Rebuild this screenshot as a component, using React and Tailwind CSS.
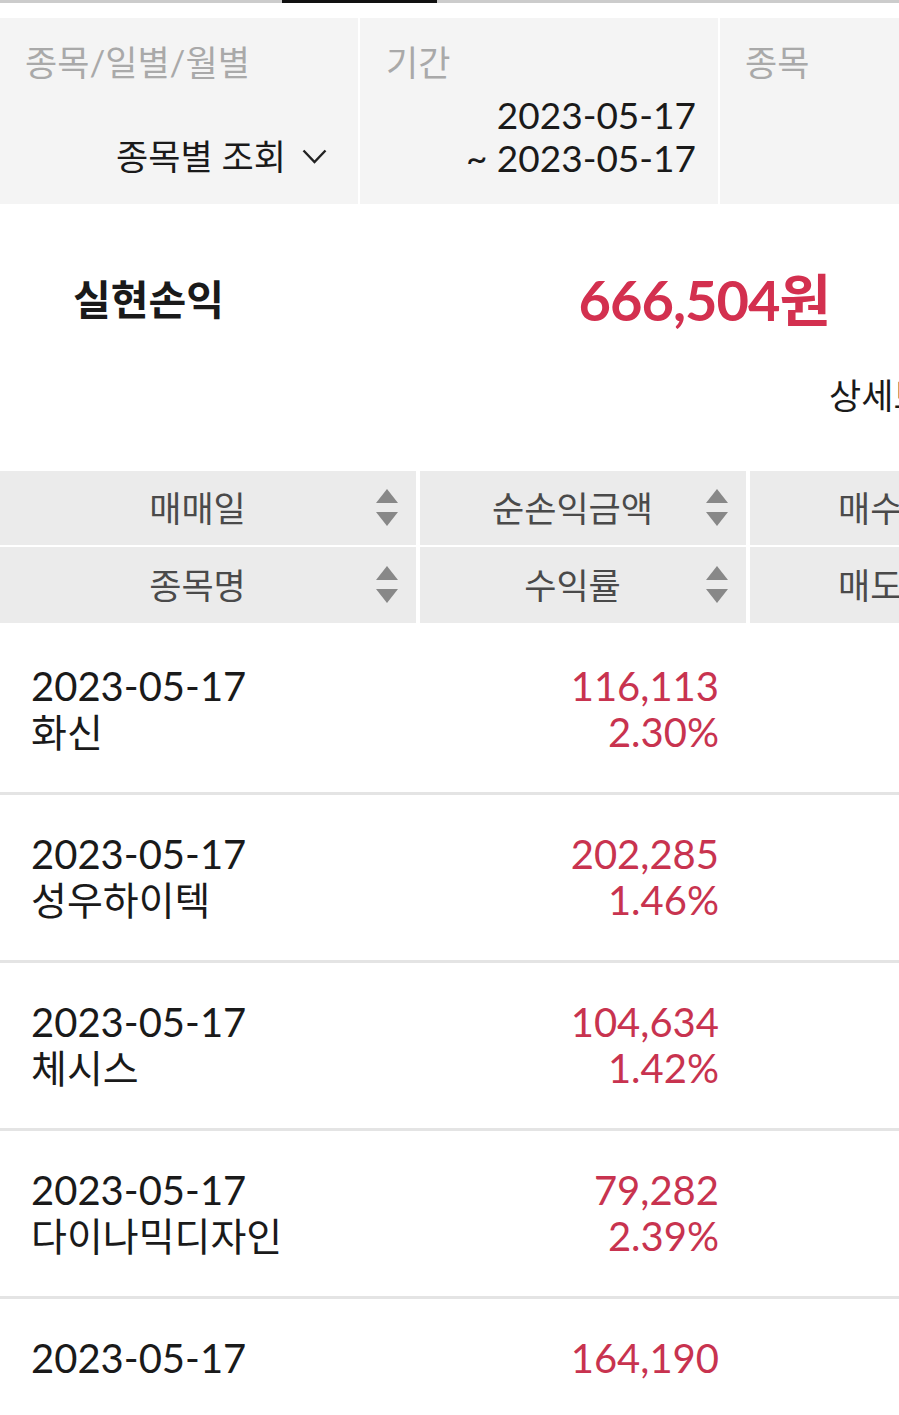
import React from 'react';

const rows = [
  { date: '2023-05-17', name: '화신', amount: '116,113', rate: '2.30%' },
  { date: '2023-05-17', name: '성우하이텍', amount: '202,285', rate: '1.46%' },
  { date: '2023-05-17', name: '체시스', amount: '104,634', rate: '1.42%' },
  { date: '2023-05-17', name: '다이나믹디자인', amount: '79,282', rate: '2.39%' },
  { date: '2023-05-17', name: '', amount: '164,190', rate: '' },
];

function SortArrows() {
  return (
    <svg width="22" height="38" viewBox="0 0 22 38" className="shrink-0">
      <path d="M11 0 L22 14 L0 14 Z" fill="#888888" />
      <path d="M0 23 L22 23 L11 37 Z" fill="#888888" />
    </svg>
  );
}

function HeaderCell({ label, width, arrows = true }) {
  return (
    <div
      className={`flex items-center h-full bg-[#ebebeb] text-[35px] text-[#4a4a4a] ${width}`}
    >
      <div className="flex-1 text-center pl-[19px] whitespace-nowrap">{label}</div>
      {arrows && <div className="pr-[18px]"><SortArrows /></div>}
    </div>
  );
}

export default function App() {
  return (
    <div className="w-[899px] overflow-hidden bg-white font-[Lato,'Noto_Sans_CJK_KR',sans-serif] text-[#1a1a1a]">
      {/* tab indicator */}
      <div className="flex h-[3px] bg-[#cccccc]">
        <div className="w-[282px]" />
        <div className="w-[155px] bg-[#111111]" />
      </div>

      {/* filter bar */}
      <div className="mt-[15px] flex h-[186px] gap-[2px] bg-white">
        <div className="w-[358px] shrink-0 bg-[#f4f4f4] pt-[24px] pl-[25px] pr-[31px] flex flex-col">
          <div className="text-[35px] leading-[40px] text-[#a9a9a9] whitespace-nowrap">종목/일별/월별</div>
          <div className="mt-[53px] flex items-center justify-end gap-[16px] text-[35px] leading-[43px]">
            <span className="whitespace-nowrap">종목별 조회</span>
            <svg width="25" height="15" viewBox="0 0 25 15">
              <polyline points="1.5,1.5 12.5,13 23.5,1.5" fill="none" stroke="#222" strokeWidth="2.4" />
            </svg>
          </div>
        </div>
        <div className="w-[358px] shrink-0 bg-[#f4f4f4] pt-[24px] pl-[26px] pr-[22px] flex flex-col">
          <div className="text-[35px] leading-[40px] text-[#a9a9a9]">기간</div>
          <div className="mt-[11px] text-right text-[37px] leading-[43px]">
            <div>2023-05-17</div>
            <div>~ 2023-05-17</div>
          </div>
        </div>
        <div className="flex-1 bg-[#f4f4f4] pt-[24px] pl-[25px]">
          <div className="text-[35px] leading-[40px] text-[#a9a9a9] whitespace-nowrap">종목</div>
        </div>
      </div>

      {/* summary */}
      <div className="flex items-center justify-between pt-[66px] pl-[73px] pr-[69px]">
        <div className="text-[41px] leading-[60px] font-bold">실현손익</div>
        <div className="text-[56px] leading-[60px] font-bold text-[#d3304f] tracking-[-1px]">666,504원</div>
      </div>
      <div className="mt-[45px] pl-[829px] whitespace-nowrap text-[35px] leading-[40px]">상세보기</div>

      {/* table header */}
      <div className="mt-[56px] flex flex-col gap-[2px]">
        <div className="flex h-[74px] gap-[4px]">
          <HeaderCell label="매매일" width="w-[416px] shrink-0" />
          <HeaderCell label="순손익금액" width="w-[326px] shrink-0" />
          <div className="flex-1 bg-[#ebebeb] flex items-center pl-[88px] text-[35px] text-[#4a4a4a] whitespace-nowrap">매수금액</div>
        </div>
        <div className="flex h-[76px] gap-[4px]">
          <HeaderCell label="종목명" width="w-[416px] shrink-0" />
          <HeaderCell label="수익률" width="w-[326px] shrink-0" />
          <div className="flex-1 bg-[#ebebeb] flex items-center pl-[88px] text-[35px] text-[#4a4a4a] whitespace-nowrap">매도금액</div>
        </div>
      </div>

      {/* rows */}
      <div className="mt-[4px]">
        {rows.map((r, i) => (
          <div
            key={i}
            className="flex h-[168px] border-b-[3px] border-[#e4e4e4] pt-[36px] pl-[31px] pr-[180px]"
          >
            <div className="flex-1">
              <div className="text-[40px] leading-[46px]">{r.date}</div>
              <div className="text-[39px] leading-[46px] whitespace-nowrap">{r.name}</div>
            </div>
            <div className="text-right text-[40px] leading-[46px] text-[#c8334f]">
              <div>{r.amount}</div>
              <div>{r.rate}</div>
            </div>
          </div>
        ))}
      </div>
    </div>
  );
}
